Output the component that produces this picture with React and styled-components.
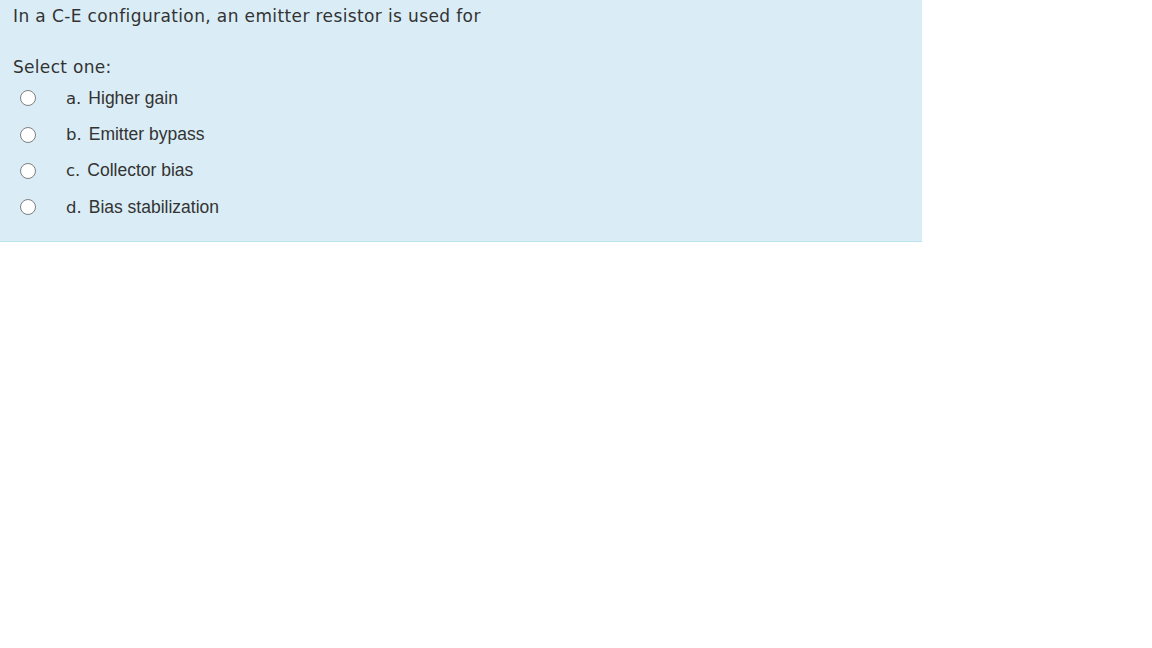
import React from "react";
import styled, { createGlobalStyle } from "styled-components";

const Global = createGlobalStyle`
  html, body { margin: 0; padding: 0; background: #fff; }
`;

const Panel = styled.div`
  width: 922px;
  box-sizing: border-box;
  background: #daedf6;
  border-bottom: 1px solid #b8e4ef;
  padding: 5px 13px 15px 13px;
  font-family: "DejaVu Sans", Verdana, sans-serif;
  color: #333;
`;

const Question = styled.div`
  font-size: 17px;
  letter-spacing: 0.38px;
  line-height: 22px;
  margin-bottom: 29px;
`;

const Prompt = styled.div`
  font-size: 17px;
  letter-spacing: 0.3px;
  line-height: 22px;
  margin-bottom: 2px;
`;

const Options = styled.div`
  display: flex;
  flex-direction: column;
`;

const Option = styled.label`
  display: flex;
  align-items: center;
  height: 36.4px;
`;

const Radio = styled.span`
  width: 16px;
  height: 16px;
  box-sizing: border-box;
  border-radius: 50%;
  border: 1px solid #808080;
  background: #fff;
  margin-left: 7px;
  margin-right: 30px;
  flex: none;
`;

const Letter = styled.span`
  font-family: "DejaVu Sans", Verdana, sans-serif;
  font-size: 16.5px;
  margin-right: 7px;
`;

const Text = styled.span`
  font-family: "Liberation Sans", Arial, sans-serif;
  font-size: 17.5px;
`;

const options = [
  ["a.", "Higher gain"],
  ["b.", "Emitter bypass"],
  ["c.", "Collector bias"],
  ["d.", "Bias stabilization"],
];

export default function App() {
  return (
    <>
      <Global />
      <Panel>
        <Question>In a C-E configuration, an emitter resistor is used for</Question>
        <Prompt>Select one:</Prompt>
        <Options>
          {options.map(([l, t]) => (
            <Option key={l}>
              <Radio />
              <Letter>{l}</Letter>
              <Text>{t}</Text>
            </Option>
          ))}
        </Options>
      </Panel>
    </>
  );
}
